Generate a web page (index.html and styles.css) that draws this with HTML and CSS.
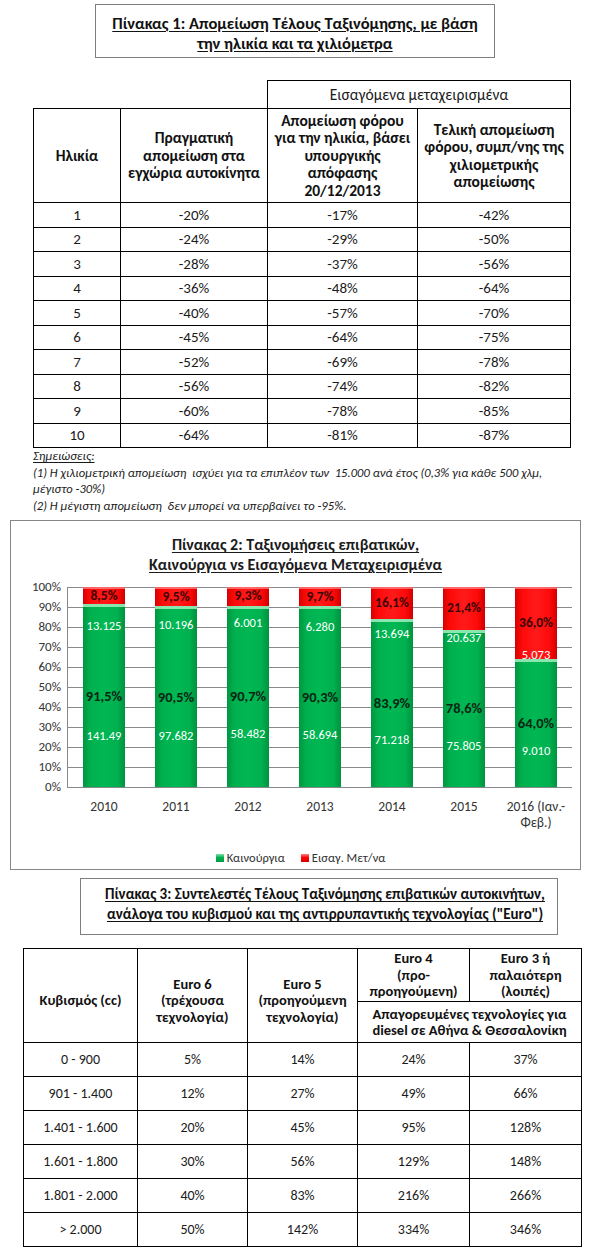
FILE: index.html
```html
<!DOCTYPE html>
<html lang="el">
<head>
<meta charset="utf-8">
<title>Τέλη Ταξινόμησης</title>
<link rel="stylesheet" href="styles.css">
</head>
<body>
<div class="page">
  <div class="title-box title1">
    <div><span class="u">Πίνακας 1: Απομείωση Τέλους Ταξινόμησης, με βάση</span></div>
    <div><span class="u">την ηλικία και τα χιλιόμετρα</span></div>
  </div>

  <table class="t1">
    <colgroup><col class="w1"><col class="w2"><col class="w3"><col class="w4"></colgroup>
    <tr class="r-top"><td class="blank"></td><td class="blank"></td><th colspan="2" class="group">Εισαγόμενα μεταχειρισμένα</th></tr>
    <tr class="r-head">
      <th>Ηλικία</th>
      <th>Πραγματική<br>απομείωση στα<br>εγχώρια αυτοκίνητα</th>
      <th>Απομείωση φόρου<br>για την ηλικία, βάσει<br>υπουργικής<br>απόφασης<br>20/12/2013</th>
      <th>Τελική απομείωση<br>φόρου, συμπ/νης της<br>χιλιομετρικής<br>απομείωσης</th>
    </tr>
    <tr><td>1</td><td>-20%</td><td>-17%</td><td>-42%</td></tr>
    <tr><td>2</td><td>-24%</td><td>-29%</td><td>-50%</td></tr>
    <tr><td>3</td><td>-28%</td><td>-37%</td><td>-56%</td></tr>
    <tr><td>4</td><td>-36%</td><td>-48%</td><td>-64%</td></tr>
    <tr><td>5</td><td>-40%</td><td>-57%</td><td>-70%</td></tr>
    <tr><td>6</td><td>-45%</td><td>-64%</td><td>-75%</td></tr>
    <tr><td>7</td><td>-52%</td><td>-69%</td><td>-78%</td></tr>
    <tr><td>8</td><td>-56%</td><td>-74%</td><td>-82%</td></tr>
    <tr><td>9</td><td>-60%</td><td>-78%</td><td>-85%</td></tr>
    <tr><td>10</td><td>-64%</td><td>-81%</td><td>-87%</td></tr>
  </table>

  <div class="notes">
    <div><span class="u">Σημειώσεις:</span></div>
    <div>(1) Η χιλιομετρική απομείωση &nbsp;ισχύει για τα επιπλέον των &nbsp;15.000 ανά έτος (0,3% για κάθε 500 χλμ,</div>
    <div>μέγιστο -30%)</div>
    <div>(2) Η μέγιστη απομείωση &nbsp;δεν μπορεί να υπερβαίνει το -95%.</div>
  </div>

  <div class="chart-box">
    <div class="chart-title">
      <div><span class="u">Πίνακας 2: Ταξινομήσεις επιβατικών,</span></div>
      <div><span class="u">Καινούργια vs Εισαγόμενα Μεταχειρισμένα</span></div>
    </div>
    <div class="chart">
      <div class="y-axis">
        <span>100%</span><span>90%</span><span>80%</span><span>70%</span><span>60%</span><span>50%</span><span>40%</span><span>30%</span><span>20%</span><span>10%</span><span>0%</span>
      </div>
      <div class="plot">
        <div class="cat">
          <div class="bar"><div class="red"><span class="lbl-red">8,5%</span></div><div class="green" style="height:91.5%"><span class="lbl-pct">91,5%</span></div></div>
          <span class="lbl-num" style="top:32px">13.125</span><span class="lbl-num" style="top:142px">141.49</span>
        </div>
        <div class="cat">
          <div class="bar"><div class="red"><span class="lbl-red">9,5%</span></div><div class="green" style="height:90.5%"><span class="lbl-pct">90,5%</span></div></div>
          <span class="lbl-num" style="top:31px">10.196</span><span class="lbl-num" style="top:142px">97.682</span>
        </div>
        <div class="cat">
          <div class="bar"><div class="red"><span class="lbl-red">9,3%</span></div><div class="green" style="height:90.7%"><span class="lbl-pct">90,7%</span></div></div>
          <span class="lbl-num" style="top:29px">6.001</span><span class="lbl-num" style="top:140px">58.482</span>
        </div>
        <div class="cat">
          <div class="bar"><div class="red"><span class="lbl-red">9,7%</span></div><div class="green" style="height:90.3%"><span class="lbl-pct">90,3%</span></div></div>
          <span class="lbl-num" style="top:33px">6.280</span><span class="lbl-num" style="top:141px">58.694</span>
        </div>
        <div class="cat">
          <div class="bar"><div class="red"><span class="lbl-red">16,1%</span></div><div class="green" style="height:83.9%"><span class="lbl-pct">83,9%</span></div></div>
          <span class="lbl-num" style="top:40px">13.694</span><span class="lbl-num" style="top:146px">71.218</span>
        </div>
        <div class="cat">
          <div class="bar"><div class="red"><span class="lbl-red">21,4%</span></div><div class="green" style="height:78.6%"><span class="lbl-pct">78,6%</span></div></div>
          <span class="lbl-num" style="top:44px">20.637</span><span class="lbl-num" style="top:152px">75.805</span>
        </div>
        <div class="cat">
          <div class="bar"><div class="red"><span class="lbl-red">36,0%</span></div><div class="green" style="height:64%"><span class="lbl-pct">64,0%</span></div></div>
          <span class="lbl-num" style="top:61px">5.073</span><span class="lbl-num" style="top:157px">9.010</span>
        </div>
      </div>
    </div>
    <div class="x-labels">
      <span>2010</span><span>2011</span><span>2012</span><span>2013</span><span>2014</span><span>2015</span><span>2016 (Ιαν.-<br>Φεβ.)</span>
    </div>
    <div class="legend">
      <span class="key"><i class="sw sw-green"></i>Καινούργια</span>
      <span class="key"><i class="sw sw-red"></i>Εισαγ. Μετ/να</span>
    </div>
  </div>

  <div class="title-box title3">
    <div><span class="u">Πίνακας 3: Συντελεστές Τέλους Ταξινόμησης επιβατικών αυτοκινήτων,</span></div>
    <div><span class="u">ανάλογα του κυβισμού και της αντιρρυπαντικής τεχνολογίας ("Euro")</span></div>
  </div>

  <table class="t3">
    <colgroup><col class="v1"><col class="v2"><col class="v3"><col class="v4"><col class="v5"></colgroup>
    <tr class="h-a">
      <th rowspan="2" class="low">Κυβισμός (cc)</th>
      <th rowspan="2" class="low">Euro 6<br>(τρέχουσα<br>τεχνολογία)</th>
      <th rowspan="2" class="low">Euro 5<br>(προηγούμενη<br>τεχνολογία)</th>
      <th>Euro 4<br>(προ-<br>προηγούμενη)</th>
      <th>Euro 3 ή<br>παλαιότερη<br>(λοιπές)</th>
    </tr>
    <tr class="h-b">
      <th colspan="2">Απαγορευμένες τεχνολογίες για<br>diesel σε Αθήνα &amp; Θεσσαλονίκη</th>
    </tr>
    <tr><td>0 - 900</td><td>5%</td><td>14%</td><td>24%</td><td>37%</td></tr>
    <tr><td>901 - 1.400</td><td>12%</td><td>27%</td><td>49%</td><td>66%</td></tr>
    <tr><td>1.401 - 1.600</td><td>20%</td><td>45%</td><td>95%</td><td>128%</td></tr>
    <tr><td>1.601 - 1.800</td><td>30%</td><td>56%</td><td>129%</td><td>148%</td></tr>
    <tr><td>1.801 - 2.000</td><td>40%</td><td>83%</td><td>216%</td><td>266%</td></tr>
    <tr><td>&gt; 2.000</td><td>50%</td><td>142%</td><td>334%</td><td>346%</td></tr>
  </table>
</div>
</body>
</html>
```

FILE: styles.css
```css
* { box-sizing: border-box; }
html, body { margin: 0; padding: 0; background: #fff; }
body {
  font-family: Carlito, Lato, "Open Sans", sans-serif;
  color: #111;
  width: 600px;
  height: 1255px;
  overflow: hidden;
}
.page { padding-top: 4px; }
.u { text-decoration: underline; text-underline-offset: 2px; }

.title-box {
  border: 1px solid #7f7f7f;
  text-align: center;
  font-weight: bold;
  white-space: nowrap;
}
.title1 {
  width: 400px;
  height: 54px;
  margin-left: 95px;
  padding-top: 8px;
  font-size: 16.5px;
  line-height: 20px;
}

/* Table 1 */
.t1 {
  margin-top: 22px;
  margin-left: 33px;
  width: 537px;
  border-collapse: collapse;
  table-layout: fixed;
  font-size: 15px;
}
.t1 .w1 { width: 87px; }
.t1 .w2 { width: 147px; }
.t1 .w3 { width: 150px; }
.t1 .w4 { width: 153px; }
.t1 th, .t1 td {
  border: 1px solid #000;
  text-align: center;
  vertical-align: middle;
  padding: 0;
  white-space: nowrap;
}
.t1 td { height: 24.5px; color: #1b1b1b; }
.t1 .blank { border: none; }
.t1 .r-top th { height: 28px; font-weight: normal; color: #1b1b1b; font-size: 15.5px; }
.t1 .r-head th { height: 94px; line-height: 17.5px; font-weight: bold; font-size: 15.5px; }

.notes {
  margin-left: 33px;
  font-size: 12.6px;
  font-style: italic;
  line-height: 16.5px;
  color: #1b1b1b;
  white-space: nowrap;
}

/* Chart */
.chart-box {
  margin-top: 6px;
  margin-left: 10px;
  width: 571px;
  height: 350px;
  border: 1px solid #878787;
  color: #333;
}
.chart-title {
  padding-top: 14px;
  text-align: center;
  font-weight: bold;
  font-size: 16px;
  line-height: 20px;
  color: #1b1b1b;
}
.chart {
  display: flex;
  align-items: flex-start;
  margin-top: 2px;
}
.y-axis {
  width: 56px;
  display: flex;
  flex-direction: column;
  align-items: flex-end;
  padding-right: 6px;
  font-size: 13px;
  line-height: 20px;
}
.plot {
  margin-top: 10px;
  width: 505px;
  height: 201px;
  border-left: 1px solid #898989;
  border-bottom: 1px solid #898989;
  background: repeating-linear-gradient(to bottom, #8a8a8a 0, #8a8a8a 1px, transparent 1px, transparent 20px);
  display: flex;
}
.cat {
  position: relative;
  width: 72px;
  height: 100%;
  display: flex;
  justify-content: center;
}
.bar {
  width: 42px;
  height: 100%;
  display: flex;
  flex-direction: column;
}
.red {
  flex: 1;
  display: flex;
  align-items: center;
  justify-content: center;
  background: linear-gradient(to right, #d80000 0%, #ff0a0a 18%, #ff1a1a 50%, #ff0a0a 82%, #d00000 100%);
  box-shadow: inset 0 2px 0 rgba(255, 140, 140, 0.7);
}
.green {
  display: flex;
  align-items: center;
  justify-content: center;
  background: linear-gradient(to right, #00973f 0%, #00b04f 18%, #00b853 50%, #00b04f 82%, #00933e 100%);
  box-shadow: inset 0 3px 0 rgba(160, 240, 190, 0.85);
}
.lbl-red {
  font-weight: bold;
  font-size: 13.5px;
  line-height: 14px;
  color: #3a0505;
  white-space: nowrap;
}
.lbl-pct {
  font-weight: bold;
  font-size: 14.5px;
  line-height: 14px;
  color: #0c2613;
  white-space: nowrap;
}
.lbl-num {
  position: absolute;
  left: 0;
  right: 0;
  text-align: center;
  font-size: 12.5px;
  line-height: 14px;
  color: #fff;
  white-space: nowrap;
}
.x-labels {
  display: flex;
  margin-top: 2px;
  margin-left: 57px;
  font-size: 13.5px;
  line-height: 16px;
}
.x-labels span {
  width: 72px;
  text-align: center;
  white-space: nowrap;
}
.legend {
  display: flex;
  justify-content: center;
  gap: 16px;
  margin-top: 20px;
  padding-left: 10px;
  font-size: 12.5px;
  line-height: 14px;
}
.key { display: flex; align-items: center; gap: 3px; }
.sw {
  display: inline-block;
  width: 8px;
  height: 8px;
}
.sw-green { background: linear-gradient(to bottom, #7fe0a5, #00b050 45%, #009a44); }
.sw-red { background: linear-gradient(to bottom, #ff8080, #ff0000 45%, #d40000); }

/* Title 3 */
.title3 {
  margin-top: 8px;
  margin-left: 80px;
  width: 478px;
  height: 57px;
  padding-top: 5px;
  padding-left: 12px;
  font-size: 15px;
  line-height: 20px;
}

/* Table 3 */
.t3 {
  margin-top: 13px;
  margin-left: 23px;
  width: 558px;
  border-collapse: collapse;
  table-layout: fixed;
  font-size: 14px;
}
.t3 .v1 { width: 114px; }
.t3 .v2 { width: 110px; }
.t3 .v3 { width: 110px; }
.t3 .v4 { width: 112px; }
.t3 .v5 { width: 112px; }
.t3 th, .t3 td {
  border: 1px solid #000;
  text-align: center;
  vertical-align: middle;
  padding: 0;
  white-space: nowrap;
}
.t3 th { font-weight: bold; line-height: 16.5px; font-size: 14.5px; }
.t3 .h-a th { height: 53px; }
.t3 .h-a th.low { padding-top: 10px; }
.t3 .h-b th { height: 41px; }
.t3 td { height: 34px; color: #1b1b1b; }
```
